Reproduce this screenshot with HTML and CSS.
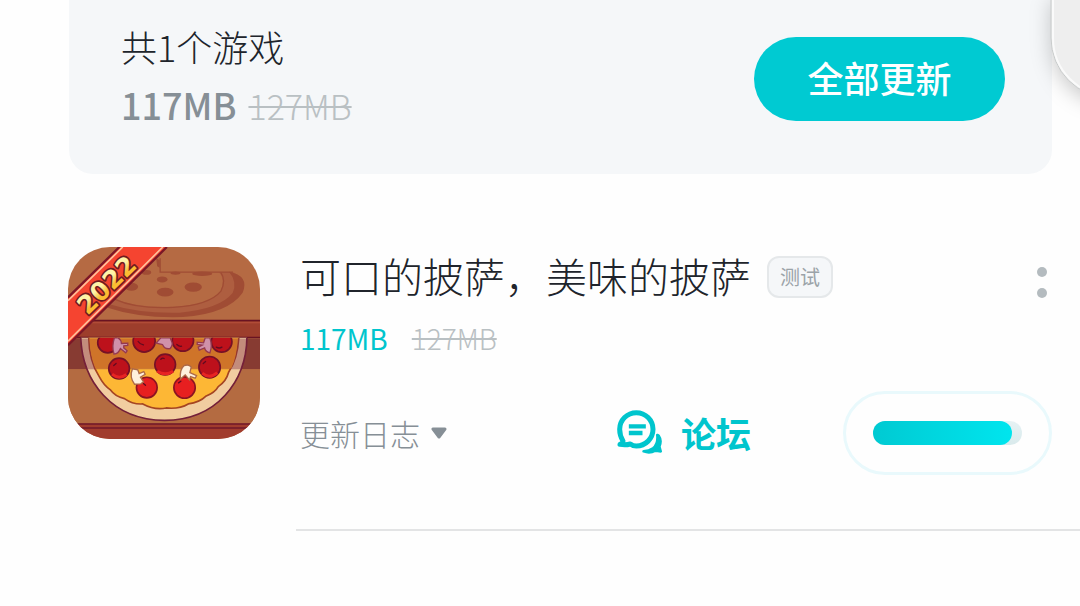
FILE: index.html
```html
<!DOCTYPE html>
<html lang="zh-CN">
<head>
  <meta charset="UTF-8">
  <meta name="viewport" content="width=device-width, initial-scale=1">
  <title>游戏更新</title>
  <link rel="stylesheet" href="styles.css">
</head>
<body>
  <svg class="float-panel" width="60" height="130" viewBox="0 0 60 130" aria-hidden="true">
    <path d="M31 -5V38A60 60 0 0 0 91 98V-5Z" fill="#eee" stroke="#c8cbcb"/>
    <path d="M33 -5V38A58 58 0 0 0 91 96" fill="none" stroke="#fafafa" stroke-width="2"/>
  </svg>

  <main>
    <section class="summary">
      <div>
        <h1 class="summary-count">共1个游戏</h1>
        <p class="summary-size"><strong>117MB</strong><del>127MB</del></p>
      </div>
      <button class="update-all" type="button">全部更新</button>
    </section>

    <article class="game">
      <svg class="game-icon" viewBox="26 26 575 575" role="img" aria-label="可口的披萨，美味的披萨">
        <defs>
          <clipPath id="slice"><path d="M60 298H566V560H60Z"/></clipPath>
          <linearGradient id="gold" x1="0" y1="0" x2="0" y2="1">
            <stop offset="0.4" stop-color="#fff3a8"/>
            <stop offset="0.65" stop-color="#fbbd32"/>
          </linearGradient>
        </defs>
        <!-- box lid -->
        <rect x="26" y="26" width="575" height="575" fill="#b56a43"/>
        <path d="M478 101H520Q556 120 538 165Q500 218 370 226Q240 228 150 204L165 180Q230 208 340 205Q450 200 482 160Q500 126 478 101Z" fill="#ae5e40"/>
        <path d="M302 60V101H520" fill="none" stroke="#a04c34" stroke-width="4"/>
        <path d="M165 182Q230 212 340 207Q450 200 484 158Q500 126 484 103" fill="none" stroke="#a04c34" stroke-width="4"/>
        <g fill="#a04c34">
          <path d="M508 100Q570 112 549 163Q505 226 370 236Q240 240 145 208V196Q240 226 360 223Q480 212 519 164Q534 130 508 100Z"/>
          <ellipse cx="261" cy="102" rx="14" ry="7"/>
          <ellipse cx="308" cy="123" rx="16" ry="9"/>
          <ellipse cx="317" cy="161" rx="25" ry="13"/>
          <ellipse cx="401" cy="146" rx="26" ry="14"/>
          <ellipse cx="348" cy="104" rx="15" ry="5"/>
          <ellipse cx="428" cy="106" rx="30" ry="7"/>
          <ellipse cx="216" cy="145" rx="20" ry="12"/>
          <path d="M290 60L301 66V88L293 84Z"/>
        </g>
        <!-- fold and inside of the box -->
        <rect x="26" y="245" width="575" height="53" fill="#9d3e2c"/>
        <path d="M26 246H601M26 297H601" stroke="#691322" stroke-width="5"/>
        <path d="M26 253H601" stroke="#b9523b" stroke-width="3"/>
        <rect x="26" y="300" width="575" height="92" fill="#873b32"/>
        <rect x="26" y="392" width="575" height="163" fill="#b46b41"/>
        <!-- pizza -->
        <g clip-path="url(#slice)">
          <path d="M64 290C66 430 160 545 315 545S562 430 562 290Z" fill="#f1cda0" stroke="#742039" stroke-width="5"/>
          <path d="M88 290C88 345 98 382 120 415Q133 440 152 453Q168 475 195 480Q220 498 250 496Q285 515 320 508Q360 512 386 496Q420 492 440 472Q466 462 476 444Q500 428 507 401C528 370 536 335 538 290Z" fill="#fdb735" stroke="#a54522" stroke-width="5"/>
          <path d="M66 300H560Q558 354 545 392H82Q68 350 66 300Z" fill="#7a2142" opacity=".38"/>
          <path d="M90 300H534Q532 354 515 390H108Q92 350 90 300Z" fill="#cf7429"/>
          <g fill="#bd111b" stroke="#761126" stroke-width="5">
            <circle cx="145" cy="313" r="30"/>
            <circle cx="254" cy="308" r="33"/>
            <circle cx="370" cy="306" r="32"/>
            <circle cx="486" cy="310" r="31"/>
            <circle cx="317" cy="378" r="31"/>
            <circle cx="179" cy="390" r="31"/>
            <circle cx="450" cy="386" r="32"/>
          </g>
          <g fill="#e71f20" stroke="#8c1422" stroke-width="5">
            <circle cx="262" cy="447" r="31"/>
            <circle cx="375" cy="447" r="32"/>
          </g>
          <path d="M293 398Q318 413 341 398M158 407Q179 425 201 408M428 404Q450 423 473 402" fill="none" stroke="#e82423" stroke-width="9"/>
          <path d="M236 309q5 8 16 10M352 318q8 7 14 5M470 326q9 5 17 0M304 362q5-5 10-2M431 375l7-6M163 381l7-6M252 435l6 5M357 433l7-5" fill="none" stroke="#610b20" stroke-width="4" stroke-linecap="round"/>
          <g fill="#d091a9" stroke="#953950" stroke-width="4">
            <path d="M165 298Q156 325 164 347Q177 346 183 330L199 343L203 337L193 328V322L205 321V314L186 315Q185 303 176 298Z"/>
            <path d="M290 314L304 298H332L336 308Q342 318 332 330Q316 334 309 318Z"/>
            <path d="M451 298Q459 323 451 343Q437 339 435 328L419 335L416 326L428 320L413 318V311L432 313L437 298Z"/>
          </g>
          <g fill="#fff0dc" stroke="#ad6947" stroke-width="4">
            <path d="M219 391Q209 414 225 437L244 436L252 430L243 416L257 407L253 399L239 405L235 394Z"/>
            <path d="M363 421Q359 394 374 381Q389 376 395 386L391 402L411 411L407 419L393 414L390 424L377 409Z"/>
          </g>
        </g>
        <!-- front edge -->
        <rect x="26" y="555" width="575" height="46" fill="#a13c2d"/>
        <path d="M26 556H601M26 568H601" stroke="#70182a" stroke-width="4"/>
        <!-- year ribbon -->
        <path d="M26 177L180 26H322L26 320Z" fill="#f54430"/>
        <path d="M26 177L180 26M26 320L322 26" stroke="#7b1727" stroke-width="7"/>
        <path d="M26 187L190 26M26 308L310 26" stroke="#ffc09a" stroke-width="5"/>
        <text class="icon-year" x="140" y="167" transform="rotate(-44 140 138)">2022</text>
      </svg>

      <div class="game-body">
        <div class="title-row">
          <h2 class="game-title">可口的披萨，美味的披萨</h2>
          <span class="tag">测试</span>
          <button class="more" type="button" aria-label="更多">
            <svg width="20" height="60" viewBox="0 0 20 60" fill="#b4bbbf">
              <circle cx="10" cy="25" r="5"/>
              <circle cx="10" cy="46" r="5"/>
            </svg>
          </button>
        </div>

        <p class="game-size"><span>117MB</span><del>127MB</del></p>

        <div class="actions">
          <button class="log" type="button">更新日志
            <svg width="16" height="12" viewBox="0 0 16 12"><path d="M2 2H14L8 10Z" fill="#868f96" stroke="#868f96" stroke-width="3" stroke-linejoin="round"/></svg>
          </button>
          <a class="forum" href="#">
            <svg width="46" height="46" viewBox="50 58 138 138" fill="none" stroke="#00c5cd" stroke-linecap="round" stroke-linejoin="round">
              <path d="M68 151Q58 135 58 116A50 50 0 1 1 108 166Q98 166 90 160Q76 164 59 161Q67 158 68 151Z" stroke-width="15"/>
              <path d="M92 107H130M92 127H120" stroke-width="13" stroke-linecap="square"/>
              <path d="M171 133L175 135Q185 149 177 168L181 182Q172 181 165 180Q148 189 130 182Q146 181 158 173Q174 160 171 133Z" fill="#00c5cd" stroke-width="8"/>
            </svg>
            论坛
          </a>
          <button class="download" type="button" aria-label="下载进度">
            <span class="track"><span class="fill" style="width: 93%"></span></span>
          </button>
        </div>
      </div>
    </article>
  </main>
</body>
</html>
```

FILE: styles.css
```css
* {
  box-sizing: border-box;
}

body {
  margin: 0;
  background: #fefefe;
  color: #20242b;
  font-family: "Noto Sans CJK SC", sans-serif;
}

h1, h2, p {
  margin: 0;
  font-weight: 300;
}

button {
  padding: 0;
  border: none;
  background: none;
  font-family: inherit;
  cursor: pointer;
}

svg {
  display: block;
  flex-shrink: 0;
}

/* panel hanging over the top right corner */
.float-panel {
  position: absolute;
  z-index: 1;
  top: 0;
  right: 0;
}

.float-panel path:first-child {
  filter: drop-shadow(0 6px 10px rgba(0, 0, 0, 0.2));
}

.summary {
  display: flex;
  justify-content: space-between;
  align-items: center;
  margin: 0 28px 0 69px;
  padding: 16px 47px 32px 52px;
  background: #f5f7f9;
  border-radius: 0 0 24px 24px;
}

.summary-count {
  font-size: 36px;
  line-height: 60px;
}

.summary-size {
  display: flex;
  align-items: baseline;
  gap: 12px;
  height: 66px;
  font-size: 34px;
  line-height: 56px;
  color: #868f96;
}

.summary-size strong {
  font-size: 36px;
  font-weight: 500;
}

del {
  color: #b9c0c3;
  text-decoration-thickness: 2px;
}

.update-all {
  width: 251px;
  height: 84px;
  padding-bottom: 4px;
  border-radius: 42px;
  background: #00cad2;
  color: #fff;
  font-size: 36px;
  font-weight: 500;
}

.game {
  display: flex;
  gap: 36px;
  padding: 73px 0 0 68px;
}

.game-icon {
  width: 192px;
  height: 192px;
  border-radius: 42px;
}

.icon-year {
  font-family: "DejaVu Sans", sans-serif;
  font-size: 76px;
  font-weight: 700;
  text-anchor: middle;
  fill: url(#gold);
  stroke: #701b20;
  stroke-width: 10px;
  stroke-linejoin: round;
  paint-order: stroke;
}

.game-body {
  flex: 1;
  padding: 0 28px 54px 4px;
  border-bottom: 2px solid #e3e4e5;
}

.title-row {
  display: flex;
  align-items: center;
  height: 60px;
}

.game-title {
  padding-bottom: 4px;
  font-size: 41px;
  line-height: 56px;
}

.tag {
  margin-left: 16px;
  padding: 0 11px;
  border: 2px solid #e5e8ea;
  border-radius: 12px;
  background: #f5f7f9;
  color: #9ba3a8;
  font-size: 20px;
  line-height: 38px;
}

.more {
  margin-left: auto;
}

.game-size {
  display: flex;
  gap: 24px;
  margin: 11px 0 33px;
  font-size: 28px;
  line-height: 40px;
}

.game-size span {
  color: #00c5cd;
  font-weight: 400;
}

.actions {
  display: flex;
  align-items: center;
}

.log {
  display: flex;
  align-items: center;
  gap: 11px;
  color: #868f96;
  font-size: 30px;
  font-weight: 300;
}

.forum {
  display: flex;
  align-items: center;
  gap: 18px;
  margin-left: auto;
  color: #00c5cd;
  font-size: 35px;
  font-weight: 700;
  line-height: 50px;
  text-decoration: none;
}

.download {
  width: 209px;
  height: 84px;
  margin-left: 92px;
  padding: 0 27px;
  border: 3px solid #e9f9fc;
  border-radius: 42px;
}

.track {
  display: block;
  height: 24px;
  border-radius: 12px;
  background: linear-gradient(#e6f2f4, #d9eaec);
}

.fill {
  display: block;
  height: 100%;
  border-radius: 12px;
  background: linear-gradient(90deg, #00cad2, #00e5ee);
}
```
